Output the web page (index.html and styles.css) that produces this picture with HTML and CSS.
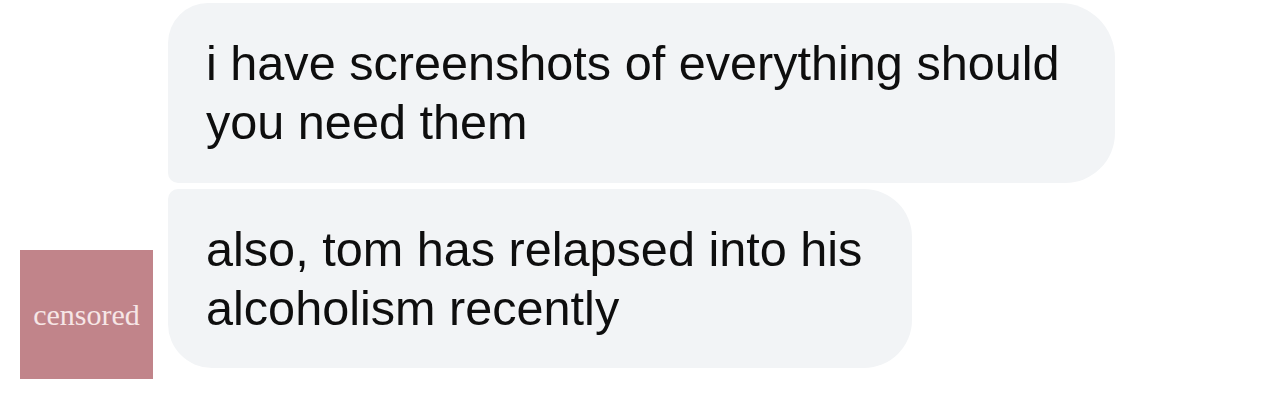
FILE: index.html
```html
<!DOCTYPE html>
<html lang="en">
<head>
  <meta charset="UTF-8" />
  <title>Messages</title>
  <link rel="stylesheet" href="styles.css">
</head>
<body>
  <div class="thread">
    <div class="row">
      <div class="bubble first">i have screenshots of everything should you need them</div>
    </div>
    <div class="row with-avatar">
      <div class="avatar">censored</div>
      <div class="bubble last">also, tom has relapsed into his alcoholism recently</div>
    </div>
  </div>
</body>
</html>
```

FILE: styles.css
```css
body {
  margin: 0;
  background: #fff;
  font-family: 'Liberation Sans', Arial, sans-serif;
}
.thread {
  display: flex;
  flex-direction: column;
  gap: 6px;
  padding-top: 3px;
}
.row {
  display: flex;
  padding-left: 168px;
}
.row.with-avatar {
  padding-left: 20px;
  align-items: flex-end;
  gap: 15px;
}
.bubble {
  background: #f2f4f6;
  color: #0e0e0e;
  font-size: 48.6px;
  line-height: 59px;
  padding: 31px 40px 31px 38px;
  box-sizing: border-box;
}
.bubble.first {
  width: 947px;
  border-radius: 40px 55px 50px 10px;
}
.bubble.last {
  width: 744px;
  padding-bottom: 30px;
  border-radius: 10px 48px 48px 44px;
  margin-bottom: 11px;
}
.avatar {
  width: 133px;
  height: 129px;
  flex-shrink: 0;
  background: #c1848a;
  color: #f6e6e6;
  font-family: 'Liberation Serif', 'Times New Roman', serif;
  font-size: 30px;
  display: flex;
  align-items: center;
  justify-content: center;
}
```
